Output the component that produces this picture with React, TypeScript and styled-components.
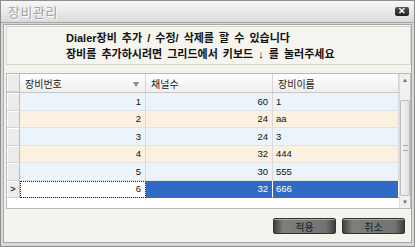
import React from 'react';
import styled, { createGlobalStyle } from 'styled-components';

const GlobalStyle = createGlobalStyle`
    html, body {
        margin: 0;
        padding: 0;
        background: #ffffff;
    }
    body {
        font-family: "Liberation Sans", "Noto Sans CJK KR", sans-serif;
    }
`;

const Window = styled.div`
    width: 415px;
    height: 247px;
    box-sizing: border-box;
    border: 1px solid #8e8e8e;
    background: #d9d9d9;
    display: flex;
    flex-direction: column;
`;

const TitleBar = styled.div`
    height: 21px;
    flex-shrink: 0;
    display: flex;
    align-items: center;
    justify-content: space-between;
    padding: 0 5px 0 7px;
    background: linear-gradient(to bottom, #f7f7f7, #e6e6e6 60%, #dadada);
    border-bottom: 1px solid #a5a5a5;
`;

const Title = styled.span`
    font-family: "Noto Sans CJK KR", sans-serif;
    font-size: 13px;
    color: #a2a2a2;
    letter-spacing: 0.5px;
    text-shadow: 1px 1px 0 #ffffff;
`;

const CloseButton = styled.div`
    width: 14px;
    height: 9px;
    border-radius: 2px;
    background: linear-gradient(to bottom, #555, #1c1c1c);
    color: #ffffff;
    font-size: 9px;
    font-weight: bold;
    line-height: 9px;
    text-align: center;
`;

const Body = styled.div`
    flex: 1;
    display: flex;
    flex-direction: column;
    padding: 1px 2px 3px 2px;
`;

const Content = styled.div`
    flex: 1;
    display: flex;
    flex-direction: column;
    border: 1px solid #a8a8a8;
    background: #f4f3ee;
    padding: 1px 0 0 2px;
`;

const Message = styled.div`
    height: 34px;
    border: 1px solid #d6d5cf;
    background: #f5f4ef;
    padding: 3px 0 0 59px;
    display: flex;
    flex-direction: column;
    font-family: "Liberation Sans", "Noto Sans CJK KR", sans-serif;
    font-size: 11px;
    font-weight: bold;
    line-height: 16px;
    color: #111111;
    word-spacing: 2px;
`;

const GridBox = styled.div`
    margin-top: 8px;
    height: 134px;
    display: flex;
    border: 1px solid #b9b9b9;
    background: #ffffff;
`;

const Table = styled.div`
    flex: 1;
    display: flex;
    flex-direction: column;
`;

const Row = styled.div`
    display: grid;
    grid-template-columns: 13px 126px 127px 1fr;
    height: 17.5px;
    box-sizing: border-box;
`;

const HeaderRow = styled(Row)`
    height: 19px;
    background: linear-gradient(to bottom, #ffffff, #eeeeee);
    border-bottom: 1px solid #c6c6c6;
`;

const HeaderCell = styled.div`
    display: flex;
    align-items: center;
    justify-content: space-between;
    padding: 0 6px 0 5px;
    font-family: "Noto Sans CJK KR", sans-serif;
    font-size: 10px;
    color: #222222;
    border-right: 1px solid #d4d4d4;
`;

const SortMark = styled.span`
    font-size: 6px;
    color: #8a8a8a;
`;

const RowHead = styled.div`
    background: #ececec;
    border-right: 1px solid #bdbdbd;
    border-bottom: 1px solid #d2d2d2;
    box-shadow: inset 1px 1px 0 #ffffff;
    display: flex;
    align-items: center;
    justify-content: center;
    font-size: 9px;
    font-weight: bold;
    color: #333333;
`;

const Cell = styled.div<{ $bg: string; $right?: boolean; $selected?: boolean; $focus?: boolean }>`
    display: flex;
    align-items: center;
    justify-content: ${(p) => (p.$right ? 'flex-end' : 'flex-start')};
    padding: 0 4px 0 3px;
    font-size: 9.5px;
    color: ${(p) => (p.$selected ? '#ffffff' : '#111111')};
    background: ${(p) => (p.$focus ? '#ffffff' : p.$selected ? '#316ac5' : p.$bg)};
    border-right: 1px solid ${(p) => (p.$selected ? '#ffffff' : '#dadada')};
    border-bottom: 1px solid ${(p) => (p.$selected ? '#316ac5' : '#e2e2e2')};
    outline: ${(p) => (p.$focus ? '1px dotted #222222' : 'none')};
    outline-offset: -1px;
`;

const Scrollbar = styled.div`
    width: 10px;
    display: flex;
    flex-direction: column;
    background: #f0f0f0;
    border-left: 1px solid #dcdcdc;
`;

const ScrollArrow = styled.div`
    height: 12px;
    display: flex;
    align-items: center;
    justify-content: center;
    font-size: 6px;
    color: #6a6a6a;
`;

const Track = styled.div`
    flex: 1;
    display: flex;
    flex-direction: column;
    padding-top: 14px;
`;

const Thumb = styled.div`
    flex: 1;
    border: 1px solid #bdbdbd;
    border-radius: 2px;
    background: linear-gradient(to right, #f4f4f4, #e2e2e2);
    display: flex;
    align-items: center;
    justify-content: center;
`;

const Grip = styled.div`
    width: 5px;
    height: 4px;
    border-top: 1px solid #a9a9a9;
    border-bottom: 1px solid #a9a9a9;
`;

const Footer = styled.div`
    flex: 1;
    display: flex;
    justify-content: flex-end;
    align-items: flex-start;
    gap: 6px;
    padding: 9px 6px 0 0;
`;

const Button = styled.div`
    width: 61px;
    height: 14px;
    border: 1px solid #333333;
    border-radius: 2px;
    background: linear-gradient(to right, #3f3f3f, #7e7e7e 15%, #737373 85%, #3f3f3f);
    box-shadow: inset 0 1px 0 #a8a8a8;
    display: flex;
    align-items: center;
    justify-content: center;
    font-family: "Noto Sans CJK KR", sans-serif;
    font-size: 10px;
    color: #1a1a1a;
`;

const rows = [
    { id: 1, channels: 60, name: '1' },
    { id: 2, channels: 24, name: 'aa' },
    { id: 3, channels: 24, name: '3' },
    { id: 4, channels: 32, name: '444' },
    { id: 5, channels: 30, name: '555' },
    { id: 6, channels: 32, name: '666' },
];

const App: React.FC = () => {
    return (
        <>
            <GlobalStyle />
            <Window>
                <TitleBar>
                    <Title>장비관리</Title>
                    <CloseButton>✕</CloseButton>
                </TitleBar>
                <Body>
                    <Content>
                        <Message>
                            <span>Dialer장비 추가 / 수정/ 삭제를 할 수 있습니다</span>
                            <span>장비를 추가하시려면 그리드에서 키보드 ↓ 를 눌러주세요</span>
                        </Message>
                        <GridBox>
                            <Table>
                                <HeaderRow>
                                    <RowHead />
                                    <HeaderCell>
                                        장비번호
                                        <SortMark>▼</SortMark>
                                    </HeaderCell>
                                    <HeaderCell>채널수</HeaderCell>
                                    <HeaderCell>장비이름</HeaderCell>
                                </HeaderRow>
                                {rows.map((row, i) => {
                                    const bg = i % 2 === 0 ? '#ebf3fb' : '#fbf1e0';
                                    const selected = row.id === 6;
                                    return (
                                        <Row key={row.id}>
                                            <RowHead>{selected ? '>' : ''}</RowHead>
                                            <Cell $bg={bg} $right $focus={selected}>{row.id}</Cell>
                                            <Cell $bg={bg} $right $selected={selected}>{row.channels}</Cell>
                                            <Cell $bg={bg} $selected={selected}>{row.name}</Cell>
                                        </Row>
                                    );
                                })}
                            </Table>
                            <Scrollbar>
                                <ScrollArrow>▲</ScrollArrow>
                                <Track>
                                    <Thumb>
                                        <Grip />
                                    </Thumb>
                                </Track>
                                <ScrollArrow>▼</ScrollArrow>
                            </Scrollbar>
                        </GridBox>
                        <Footer>
                            <Button>적용</Button>
                            <Button>취소</Button>
                        </Footer>
                    </Content>
                </Body>
            </Window>
        </>
    );
};

export default App;
